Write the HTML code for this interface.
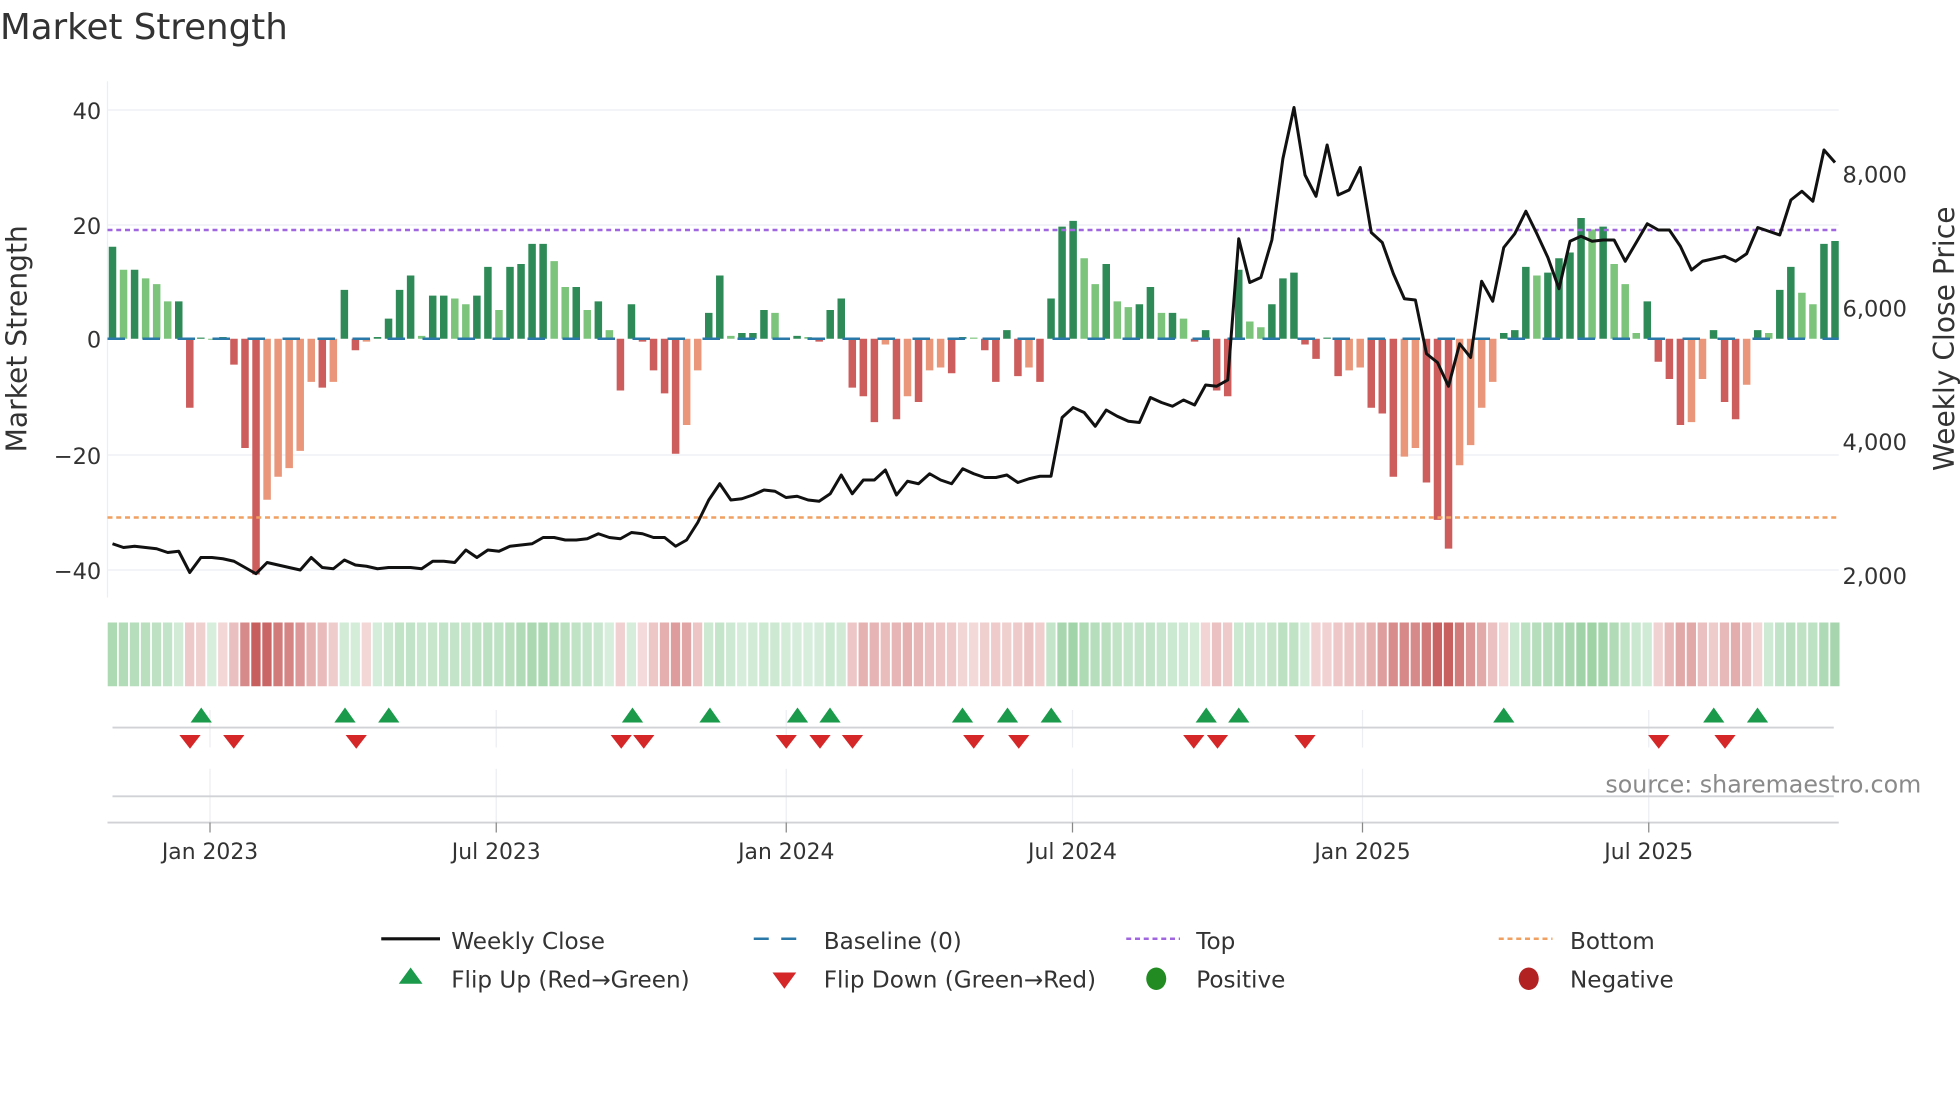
<!DOCTYPE html>
<html><head><meta charset="utf-8">
<style>
html,body{margin:0;padding:0;background:#fff;width:1960px;height:1102px;overflow:hidden}
svg{display:block}
text{font-family:"DejaVu Sans","Liberation Sans",sans-serif;fill:#333}
</style></head>
<body>
<svg id="s" width="1960" height="1102" viewBox="0 0 1568 881.6" xmlns="http://www.w3.org/2000/svg">
<text x="0" y="31" font-size="28.5">Market Strength</text>
<g stroke="#eceef2" stroke-width="1">
<line x1="86" y1="88" x2="1471" y2="88"/><line x1="86" y1="180" x2="1471" y2="180"/>
<line x1="86" y1="364" x2="1471" y2="364"/><line x1="86" y1="456" x2="1471" y2="456"/>
<line x1="86" y1="65" x2="86" y2="478"/>
<line x1="168" y1="568" x2="168" y2="598"/><line x1="397" y1="568" x2="397" y2="598"/><line x1="629" y1="568" x2="629" y2="598"/><line x1="858" y1="568" x2="858" y2="598"/><line x1="1090" y1="568" x2="1090" y2="598"/><line x1="1319" y1="568" x2="1319" y2="598"/>
<line x1="168" y1="615" x2="168" y2="658"/><line x1="397" y1="615" x2="397" y2="658"/><line x1="629" y1="615" x2="629" y2="658"/><line x1="858" y1="615" x2="858" y2="658"/><line x1="1090" y1="615" x2="1090" y2="658"/><line x1="1319" y1="615" x2="1319" y2="658"/>
</g>
<g id="bars"></g>
<line x1="86" y1="271" x2="1471" y2="271" stroke="#2a78a8" stroke-width="2" stroke-dasharray="14,14"/>
<line x1="86" y1="184" x2="1471" y2="184" stroke="#a066e0" stroke-width="2" stroke-dasharray="4,3"/>
<line x1="86" y1="414" x2="1471" y2="414" stroke="#f0a060" stroke-width="2" stroke-dasharray="4,3"/>
<polyline id="price" fill="none" stroke="#111" stroke-width="2.4" stroke-linejoin="round"/>
<g id="heat"></g>
<line x1="90" y1="582" x2="1467" y2="582" stroke="#d0d2d6" stroke-width="1.5"/>
<g id="flips"></g>
<line x1="90" y1="637" x2="1467" y2="637" stroke="#d0d2d6" stroke-width="1.5"/>
<line x1="86" y1="658" x2="1471" y2="658" stroke="#d0d2d6" stroke-width="1.5"/>
<g stroke="#888" stroke-width="1"><line x1="168" y1="658" x2="168" y2="666"/><line x1="397" y1="658" x2="397" y2="666"/><line x1="629" y1="658" x2="629" y2="666"/><line x1="858" y1="658" x2="858" y2="666"/><line x1="1090" y1="658" x2="1090" y2="666"/><line x1="1319" y1="658" x2="1319" y2="666"/></g>
<g font-size="17.5" text-anchor="middle">
<text x="168" y="687">Jan 2023</text><text x="397" y="687">Jul 2023</text><text x="629" y="687">Jan 2024</text><text x="858" y="687">Jul 2024</text><text x="1090" y="687">Jan 2025</text><text x="1319" y="687">Jul 2025</text>
</g>
<g font-size="18" text-anchor="end">
<text x="81" y="95">40</text><text x="81" y="187">20</text><text x="81" y="278">0</text><text x="81" y="371">−20</text><text x="81" y="463">−40</text>
</g>
<g font-size="18">
<text x="1474" y="146">8,000</text><text x="1474" y="253">6,000</text><text x="1474" y="360">4,000</text><text x="1474" y="467">2,000</text>
</g>
<text transform="translate(21,271) rotate(-90)" font-size="22.5" text-anchor="middle">Market Strength</text>
<text transform="translate(1563,271) rotate(-90)" font-size="22.5" text-anchor="middle">Weekly Close Price</text>
<text x="1537" y="634" font-size="19" text-anchor="end" style="fill:#8a8a8a">source: sharemaestro.com</text>
<g font-size="18.5">
<line x1="305" y1="751" x2="352" y2="751" stroke="#111" stroke-width="2.5"/><text x="361" y="759">Weekly Close</text>
<line x1="603" y1="751" x2="645" y2="751" stroke="#2a78a8" stroke-width="2" stroke-dasharray="12,10"/><text x="659" y="759">Baseline (0)</text>
<line x1="901" y1="751" x2="944" y2="751" stroke="#a066e0" stroke-width="2" stroke-dasharray="4,3"/><text x="957" y="759">Top</text>
<line x1="1199" y1="751" x2="1242" y2="751" stroke="#f0a060" stroke-width="2" stroke-dasharray="4,3"/><text x="1256" y="759">Bottom</text>
<polygon points="319,787 338,787 328.5,774" fill="#1a9a4a"/><text x="361" y="790">Flip Up (Red→Green)</text>
<polygon points="618,778 637,778 627.5,791" fill="#d62728"/><text x="659" y="790">Flip Down (Green→Red)</text>
<ellipse cx="925" cy="783" rx="8" ry="9" fill="#228b22"/><text x="957" y="790">Positive</text>
<ellipse cx="1223" cy="783" rx="8" ry="9" fill="#b22222"/><text x="1256" y="790">Negative</text>
</g>
</svg>
<script>
var v=[16,12,12,10.5,9.5,6.5,6.5,-12,0.2,0,0.3,-4.5,-19,-41,-28,-24,-22.5,-19.5,-7.5,-8.5,-7.5,8.5,-2,-0.5,0.3,3.5,8.5,11,0.5,7.5,7.5,7,6,7.5,12.5,5,12.5,13,16.5,16.5,13.5,9,9,5,6.5,1.5,-9,6,-0.5,-5.5,-9.5,-20,-15,-5.5,4.5,11,0.5,1,1,5,4.5,0.2,0.5,0.3,-0.5,5,7,-8.5,-10,-14.5,-1,-14,-10,-11,-5.5,-5,-6,0.3,0.2,-2,-7.5,1.5,-6.5,-5,-7.5,7,19.5,20.5,14,9.5,13,6.5,5.5,6,9,4.5,4.5,3.5,-0.5,1.5,-9,-10,12,3,2,6,10.5,11.5,-1,-3.5,0.2,-6.5,-5.5,-5,-12,-13,-24,-20.5,-19,-25,-31.5,-36.5,-22,-18.5,-12,-7.5,1,1.5,12.5,11,11.5,14,15,21,19,19.5,13,9.5,1,6.5,-4,-7,-15,-14.5,-7,1.5,-11,-14,-8,1.5,1,8.5,12.5,8,6,16.5,17];
var p=[435,438,437,438,439,442,441,458,446,446,447,449,454,459,450,452,454,456,446,454,455,448,452,453,455,454,454,454,455,449,449,450,440,446,440,441,437,436,435,430,430,432,432,431,427,430,431,426,427,430,430,437,432,418,400,387,400,399,396,392,393,398,397,400,401,395,380,395,384,384,376,396,385,387,379,384,387,375,379,382,382,380,386,383,381,381,334,326,330,341,328,333,337,338,318,322,325,320,324,308,309,304,191,226,222,192,127,86,140,157,116,156,152,134,186,194,219,239,240,283,290,309,275,286,225,241,198,187,169,187,206,231,193,189,193,192,192,209,194,179,184,184,197,216,209,207,205,209,203,182,185,188,160,153,161,120,130];
var NS="http://www.w3.org/2000/svg";
function el(t,a,par){var e=document.createElementNS(NS,t);for(var k in a)e.setAttribute(k,a[k]);document.getElementById(par).appendChild(e);return e;}
var n=v.length,step=1378/(n-1);
for(var i=0;i<n;i++){
 var x=90+i*step,val=v[i],prev=i?v[i-1]:0,c;
 if(val>=0)c=(val>=prev)?"#2e8b57":"#7cc47c";else c=(val<=prev)?"#cd5c5c":"#e9967a";
 var y0=271,y1=271-val*4.6;
 el("rect",{x:x-3,y:Math.min(y0,y1),width:6,height:Math.max(0.8,Math.abs(y1-y0)),fill:c},"bars");
 var s=(v[Math.max(0,i-1)]+2*val+v[Math.min(n-1,i+1)])/4;
 var t=Math.min(1,Math.abs(s)/30),col;
 if(s>=0){col="rgb("+Math.round(215-(215-130)*t)+","+Math.round(238-(238-196)*t)+","+Math.round(220-(220-138)*t)+")";}
 else{t=Math.min(1,Math.abs(s)/32);col="rgb("+Math.round(244-(244-200)*t)+","+Math.round(218-(218-95)*t)+","+Math.round(218-(218-95)*t)+")";}
 el("rect",{x:x-step/2+0.6,y:498,width:step-1.4,height:51,fill:col},"heat");
}
var pts=[],m=p.length,st2=1378/(m-1);
for(var j=0;j<m;j++)pts.push((90+j*st2).toFixed(1)+","+p[j]);
document.getElementById("price").setAttribute("points",pts.join(" "));
var up=[161,276,311,506,568,638,664,770,806,841,965,991,1203,1371,1406],dn=[152,187,285,497,515,629,656,682,779,815,955,974,1044,1327,1380];
up.forEach(function(x){el("polygon",{points:(x-8.5)+",578 "+(x+8.5)+",578 "+x+",566",fill:"#1a9a4a"},"flips");});
dn.forEach(function(x){el("polygon",{points:(x-8.5)+",588 "+(x+8.5)+",588 "+x+",599",fill:"#d62728"},"flips");});
</script>
</body></html>
